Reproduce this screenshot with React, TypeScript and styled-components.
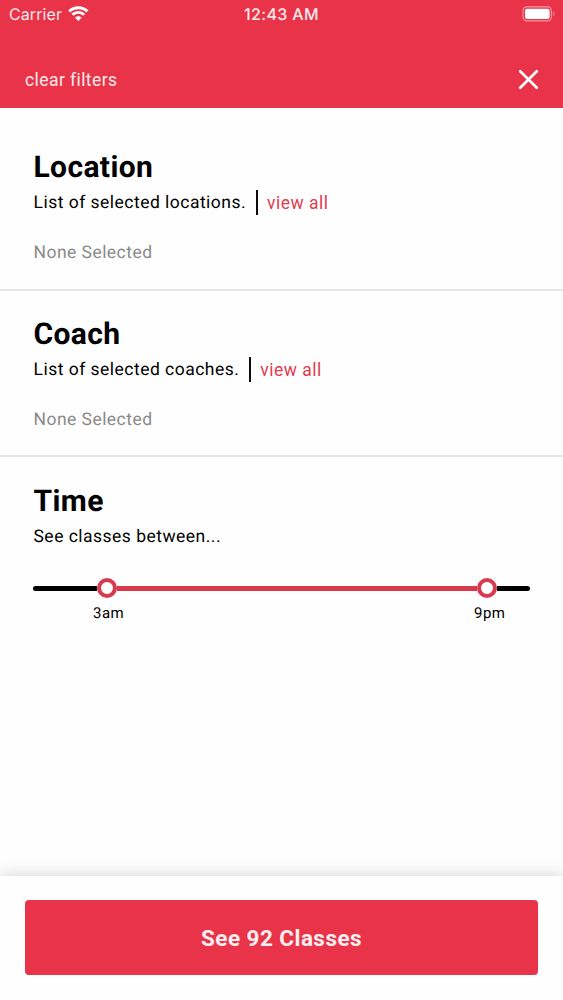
import React from "react";
import styled, { createGlobalStyle } from "styled-components";

const RED = "#e93349";
const LINE_RED = "#d93a4b";

const GlobalStyle = createGlobalStyle`
  *, *::before, *::after { box-sizing: border-box; }
  body { margin: 0; background: #fefefe; text-rendering: geometricPrecision; }
  button { border: 0; padding: 0; background: none; font: inherit; letter-spacing: inherit; cursor: pointer; }
`;

const Screen = styled.div`
  display: flex;
  flex-direction: column;
  width: 100%;
  height: 100vh;
  min-height: 1000px;
  background: #fefefe;
  color: #000;
  font-family: Roboto, "Liberation Sans", sans-serif;
  overflow: hidden;
`;

const Header = styled.header`
  flex: none;
  height: 108px;
  background: ${RED};
  color: #fdebec;
`;

const StatusBar = styled.div`
  display: grid;
  grid-template-columns: 1fr auto 1fr;
  align-items: center;
  height: 28px;
  padding: 0 8px 0 9px;
  font-family: Inter, "Liberation Sans", sans-serif;
`;

const CarrierGroup = styled.div`
  display: flex;
  align-items: center;
  gap: 6px;
`;

const Carrier = styled.span`
  font-size: 16px;
  line-height: 20px;
  letter-spacing: 0.1px;
`;

const Clock = styled.span`
  margin-left: -1px;
  font-size: 16px;
  line-height: 20px;
  font-weight: 550;
  letter-spacing: 0.35px;
`;

const BatterySlot = styled.div`
  display: flex;
  justify-content: flex-end;
`;

const Toolbar = styled.div`
  display: flex;
  align-items: center;
  justify-content: space-between;
  height: 80px;
  padding: 23px 24px 0 25px;
`;

const ClearButton = styled.button`
  color: inherit;
  font-size: 17.5px;
  line-height: 24px;
  letter-spacing: 0.42px;
`;

const CloseButton = styled.button`
  display: flex;
  margin-bottom: 1px;
  color: #fff;
`;

const Section = styled.section<{ $first?: boolean; $last?: boolean }>`
  flex: none;
  padding: ${({ $first, $last }) => ($first ? 42 : $last ? 27 : 26)}px 33px ${({ $first }) => ($first ? 23 : 22)}px 33.5px;
  border-bottom: ${({ $last }) => ($last ? "0" : "2px solid #e6e6e7")};
`;

const Title = styled.h2`
  margin: 0;
  font-size: 30px;
  line-height: 36px;
  font-weight: 700;
  letter-spacing: 0.38px;
`;

const Summary = styled.div`
  display: flex;
  align-items: center;
  height: 25px;
  margin-top: 4px;
  font-size: 17.5px;
  line-height: 24px;
  letter-spacing: 0.48px;
  white-space: nowrap;
`;

const Divider = styled.span`
  width: 2px;
  height: 25px;
  margin: 0 9px 0 10px;
  background: #0c0c0c;
`;

const ViewAll = styled.button`
  color: #df3d50;
`;

const Selection = styled.p`
  margin: 25px 0 0;
  color: #8a8a8a;
  font-size: 17.5px;
  line-height: 26px;
  letter-spacing: 0.46px;
`;

const Slider = styled.div`
  margin: 29px 0 0 -0.5px;
`;

const Track = styled.div`
  display: flex;
  align-items: center;
  height: 20px;
`;

const Outer = styled.span<{ $width: number; $side: "left" | "right" }>`
  width: ${({ $width }) => $width}px;
  height: 5px;
  background: #000;
  border-radius: ${({ $side }) => ($side === "left" ? "3px 0 0 3px" : "0 3px 3px 0")};
`;

const Range = styled.span`
  flex: 1;
  height: 5px;
  background: ${LINE_RED};
`;

const Thumb = styled.span`
  flex: none;
  width: 20px;
  height: 20px;
  border: 4px solid #d83b50;
  border-radius: 50%;
  background: #fff;
`;

const SliderLabels = styled.div`
  display: flex;
  justify-content: space-between;
  padding: 0 24.5px 0 60px;
  margin-top: 5px;
  font-size: 15px;
  line-height: 20px;
  letter-spacing: 0.5px;
`;

const Footer = styled.footer`
  flex: none;
  height: 124.5px;
  margin-top: auto;
  padding: 24.5px 25px 0 25px;
  background: #fefefe;
  box-shadow: 0 -1px 14px rgba(40, 30, 50, 0.18);
`;

const SubmitButton = styled.button`
  width: 100%;
  height: 75px;
  border-radius: 4px;
  background: ${RED};
  color: #fdeff0;
  font-size: 22.5px;
  font-weight: 700;
  letter-spacing: 0.45px;
`;

function WifiIcon() {
  return (
    <svg width="21" height="16" viewBox="0 0 21 16" fill="none" stroke="#fff" strokeWidth="2.9">
      <path d="M1.2 5.4a13.2 13.2 0 0 1 18.2 0" />
      <path d="M4.4 8.8a8.5 8.5 0 0 1 11.8 0" />
      <path d="M10.3 15 7 11.7a4.7 4.7 0 0 1 6.6 0z" fill="#fff" stroke="none" />
    </svg>
  );
}

function BatteryIcon() {
  return (
    <svg width="33" height="16" viewBox="0 0 33 16">
      <rect x="1.1" y="0.9" width="28.2" height="14" rx="3.6" fill="none" stroke="#f49aa5" strokeWidth="1.1" />
      <rect x="3" y="2.8" width="24.6" height="10.2" rx="2" fill="#fff" />
      <path d="M31.2 5.7c1.6.6 1.6 3.8 0 4.4z" fill="#f49aa5" />
    </svg>
  );
}

function CloseIcon() {
  return (
    <svg width="21" height="21" viewBox="0 0 21 21" fill="none" stroke="currentColor" strokeWidth="2.7" strokeLinecap="round">
      <path d="M2.2 2.2l16.6 16.6M18.8 2.2L2.2 18.8" />
    </svg>
  );
}

function FilterSection({ title, summary, first }: { title: string; summary: string; first?: boolean }) {
  return (
    <Section $first={first}>
      <Title>{title}</Title>
      <Summary>
        {summary}
        <Divider />
        <ViewAll>view all</ViewAll>
      </Summary>
      <Selection>None Selected</Selection>
    </Section>
  );
}

export default function App() {
  return (
    <>
      <GlobalStyle />
      <Screen>
        <Header>
          <StatusBar>
            <CarrierGroup>
              <Carrier>Carrier</Carrier>
              <WifiIcon />
            </CarrierGroup>
            <Clock>12:43 AM</Clock>
            <BatterySlot>
              <BatteryIcon />
            </BatterySlot>
          </StatusBar>
          <Toolbar>
            <ClearButton>clear filters</ClearButton>
            <CloseButton aria-label="Close">
              <CloseIcon />
            </CloseButton>
          </Toolbar>
        </Header>
        <FilterSection first title="Location" summary="List of selected locations." />
        <FilterSection title="Coach" summary="List of selected coaches." />
        <Section $last>
          <Title>Time</Title>
          <Summary>See classes between...</Summary>
          <Slider>
            <Track>
              <Outer $width={64} $side="left" />
              <Thumb />
              <Range />
              <Thumb />
              <Outer $width={33} $side="right" />
            </Track>
            <SliderLabels>
              <span>3am</span>
              <span>9pm</span>
            </SliderLabels>
          </Slider>
        </Section>
        <Footer>
          <SubmitButton>See 92 Classes</SubmitButton>
        </Footer>
      </Screen>
    </>
  );
}
